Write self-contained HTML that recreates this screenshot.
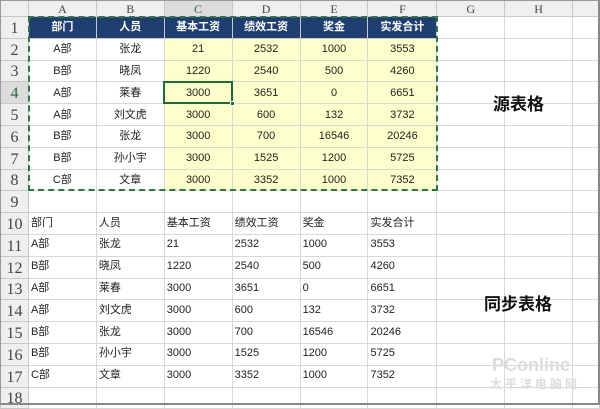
<!DOCTYPE html>
<html><head><meta charset="utf-8"><style>
*{margin:0;padding:0;box-sizing:border-box}
body{width:600px;height:405px;overflow:hidden;background:#fff;font-family:"Liberation Sans","Noto Sans CJK SC",sans-serif;position:relative}
table{border-collapse:collapse;table-layout:fixed;position:absolute;left:0;top:0}
td{border:1px solid #d8d8d8;font-size:11px;line-height:14px;color:#222;white-space:nowrap;overflow:hidden;padding:0 2px;height:21.8px;vertical-align:middle}
tr.h td{height:16px;background:#efefef;text-align:center;font-family:"Liberation Serif","Noto Serif CJK SC",serif;color:#444;font-size:12px;border-color:#c8c8c8}
td.r{background:#efefef;text-align:center;vertical-align:bottom;font-family:"Liberation Serif",serif;font-size:16px;line-height:18px;color:#444;border-color:#c8c8c8}
tr.top td.n{background:#1f3f72;color:#fff;font-weight:bold;text-align:center;border-color:#c8c8c8}
td.c{text-align:center}
td.y{background:#ffffcc;text-align:center}
td.u{padding-bottom:2px}
.sel{position:absolute;left:163px;top:81px;width:70px;height:23px;border:2px solid #1e6b3a}
.sel i{position:absolute;right:-4px;bottom:-4px;width:5px;height:5px;background:#1e6b3a;border:1px solid #fff}
.dash{position:absolute;left:28px;top:16px;width:410px;height:175px;border:2px dashed #2a7a42}
.lab{position:absolute;font-weight:bold;font-size:17px;color:#111}
.wm{position:absolute;color:#ddd;font-weight:bold}
.frame{position:absolute;left:0;top:0;width:600px;height:405px;border:1px solid #999;border-right:2px solid #888;border-bottom:2px solid #888}
</style></head><body>
<table>
<colgroup><col style="width:28px"><col style="width:68px"><col style="width:68px"><col style="width:68px"><col style="width:68px"><col style="width:68px"><col style="width:69px"><col style="width:68px"><col style="width:68px"><col style="width:27px"></colgroup>
<tr class="h"><td></td><td>A</td><td>B</td><td style="background:#dcdcdc;color:#1e6b3a">C</td><td>D</td><td>E</td><td>F</td><td>G</td><td>H</td><td></td></tr>
<tr class="top"><td class="r">1</td><td class="n">部门</td><td class="n">人员</td><td class="n">基本工资</td><td class="n">绩效工资</td><td class="n">奖金</td><td class="n">实发合计</td><td></td><td></td><td></td></tr>
<tr><td class="r">2</td><td class="c">A部</td><td class="c">张龙</td><td class="y">21</td><td class="y">2532</td><td class="y">1000</td><td class="y">3553</td><td></td><td></td><td></td></tr>
<tr><td class="r">3</td><td class="c">B部</td><td class="c">晓凤</td><td class="y">1220</td><td class="y">2540</td><td class="y">500</td><td class="y">4260</td><td></td><td></td><td></td></tr>
<tr><td class="r" style="background:#dcdcdc;color:#1e6b3a">4</td><td class="c">A部</td><td class="c">莱春</td><td class="y">3000</td><td class="y">3651</td><td class="y">0</td><td class="y">6651</td><td></td><td></td><td></td></tr>
<tr><td class="r">5</td><td class="c">A部</td><td class="c">刘文虎</td><td class="y">3000</td><td class="y">600</td><td class="y">132</td><td class="y">3732</td><td></td><td></td><td></td></tr>
<tr><td class="r">6</td><td class="c">B部</td><td class="c">张龙</td><td class="y">3000</td><td class="y">700</td><td class="y">16546</td><td class="y">20246</td><td></td><td></td><td></td></tr>
<tr><td class="r">7</td><td class="c">B部</td><td class="c">孙小宇</td><td class="y">3000</td><td class="y">1525</td><td class="y">1200</td><td class="y">5725</td><td></td><td></td><td></td></tr>
<tr><td class="r">8</td><td class="c">C部</td><td class="c">文章</td><td class="y">3000</td><td class="y">3352</td><td class="y">1000</td><td class="y">7352</td><td></td><td></td><td></td></tr>
<tr><td class="r">9</td><td></td><td></td><td></td><td></td><td></td><td></td><td></td><td></td><td></td></tr>
<tr><td class="r">10</td><td class="u">部门</td><td class="u">人员</td><td class="u">基本工资</td><td class="u">绩效工资</td><td class="u">奖金</td><td class="u">实发合计</td><td></td><td></td><td></td></tr>
<tr><td class="r">11</td><td class="u">A部</td><td class="u">张龙</td><td class="u">21</td><td class="u">2532</td><td class="u">1000</td><td class="u">3553</td><td></td><td></td><td></td></tr>
<tr><td class="r">12</td><td class="u">B部</td><td class="u">晓凤</td><td class="u">1220</td><td class="u">2540</td><td class="u">500</td><td class="u">4260</td><td></td><td></td><td></td></tr>
<tr><td class="r">13</td><td class="u">A部</td><td class="u">莱春</td><td class="u">3000</td><td class="u">3651</td><td class="u">0</td><td class="u">6651</td><td></td><td></td><td></td></tr>
<tr><td class="r">14</td><td class="u">A部</td><td class="u">刘文虎</td><td class="u">3000</td><td class="u">600</td><td class="u">132</td><td class="u">3732</td><td></td><td></td><td></td></tr>
<tr><td class="r">15</td><td class="u">B部</td><td class="u">张龙</td><td class="u">3000</td><td class="u">700</td><td class="u">16546</td><td class="u">20246</td><td></td><td></td><td></td></tr>
<tr><td class="r">16</td><td class="u">B部</td><td class="u">孙小宇</td><td class="u">3000</td><td class="u">1525</td><td class="u">1200</td><td class="u">5725</td><td></td><td></td><td></td></tr>
<tr><td class="r">17</td><td class="u">C部</td><td class="u">文章</td><td class="u">3000</td><td class="u">3352</td><td class="u">1000</td><td class="u">7352</td><td></td><td></td><td></td></tr>
<tr><td class="r">18</td><td></td><td></td><td></td><td></td><td></td><td></td><td></td><td></td><td></td></tr>
</table>
<div class="dash"></div>
<div class="sel"><i></i></div>
<div class="lab" style="left:493px;top:90px">源表格</div>
<div class="lab" style="left:484px;top:290px">同步表格</div>
<div class="wm" style="left:492px;top:355px;font-size:18px">PConline</div>
<div class="wm" style="left:490px;top:375px;font-size:12px;letter-spacing:3px">太平洋电脑网</div>
<div class="frame"></div>
</body></html>
